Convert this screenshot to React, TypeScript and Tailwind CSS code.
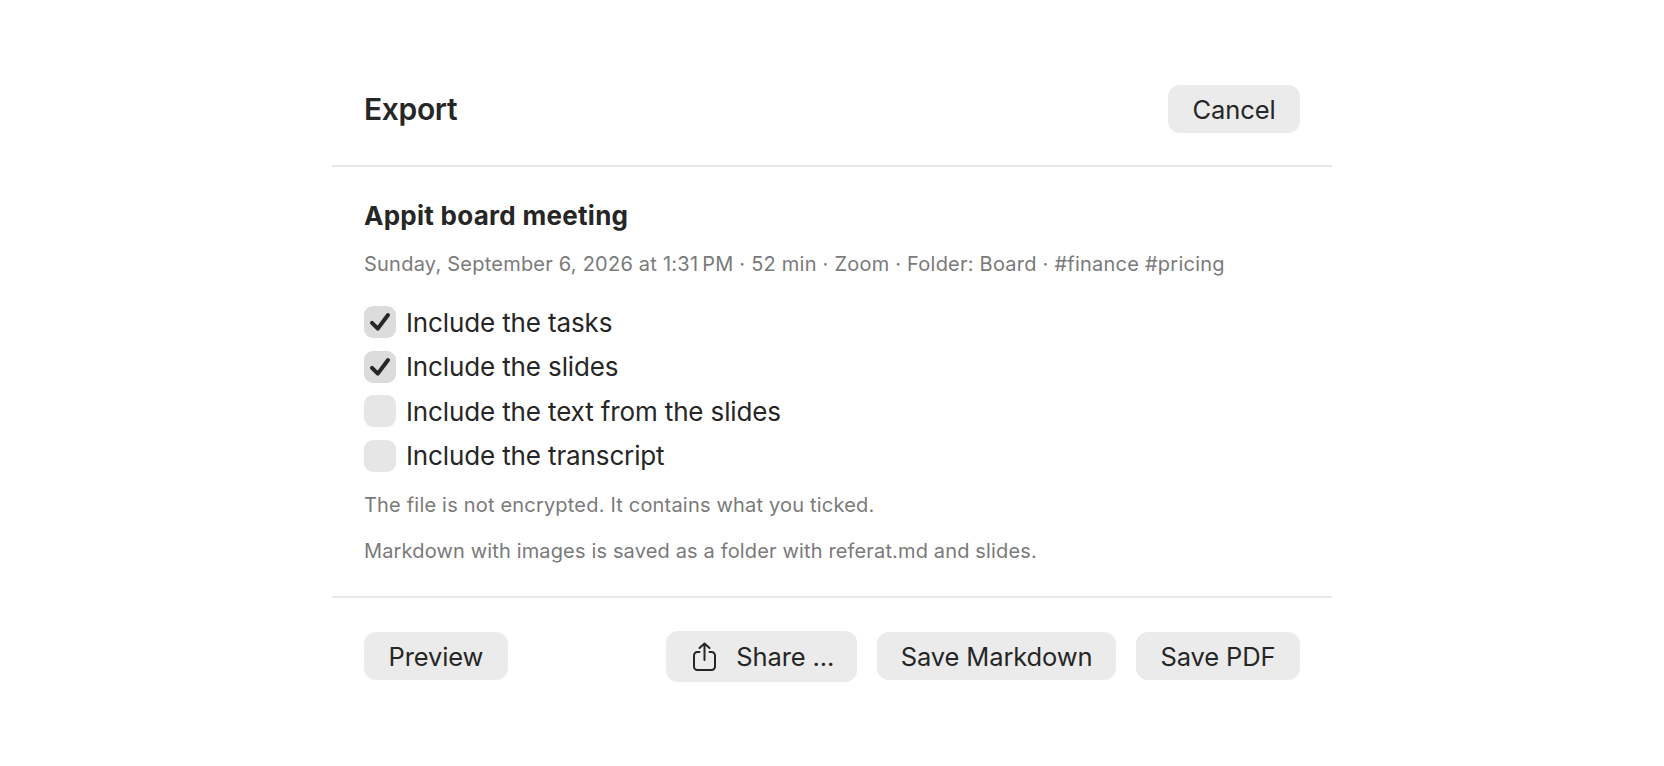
const options = [
  { label: 'Include the tasks', checked: true },
  { label: 'Include the slides', checked: true },
  { label: 'Include the text from the slides', checked: false },
  { label: 'Include the transcript', checked: false },
];

function Button({ children, className = '' }: { children: React.ReactNode; className?: string }) {
  return (
    <button className={`flex h-12 items-center justify-center rounded-[12px] bg-[#ebebeb] px-[24.5px] pt-[3px] text-[25.5px] tracking-[-0.12px] text-[#262626] ${className}`}>
      {children}
    </button>
  );
}

export default function App() {
  return (
    <div className="flex min-h-screen justify-center bg-white font-['Inter','Liberation_Sans',sans-serif]">
      <div className="mt-[85px] w-[1000px]">
        {/* Header */}
        <div className="flex h-[82px] items-start justify-between border-b-2 border-[#e8e8e8] px-8">
          <h1 className="mt-[2px] text-[30px] font-semibold tracking-[-0.35px] text-[#262626]">Export</h1>
          <Button>Cancel</Button>
        </div>

        {/* Body */}
        <div className="border-b-2 border-[#e8e8e8] px-8 pb-[31px] pt-[31px]">
          <h2 className="text-[26px] font-bold leading-[36px] tracking-[0.28px] text-[#262626]">Appit board meeting</h2>
          <p className="mt-[16px] text-[20px] leading-[28px] tracking-[0.23px] text-[#7a7a7a]">
            Sunday, September 6, 2026 at 1:31{'\u2009'}PM · 52 min · Zoom · Folder: Board · #finance #pricing
          </p>
          <div className="mt-[28px] flex flex-col gap-[12.5px]">
            {options.map((o) => (
              <label key={o.label} className="flex h-8 items-center gap-[10px] text-[26px] tracking-[-0.13px] text-[#262626]">
                <span className={`flex h-8 w-8 items-center justify-center rounded-[9px] ${o.checked ? 'bg-[#dcdcdc]' : 'bg-[#e6e6e6]'}`}>
                  {o.checked && (
                    <svg width="32" height="32" viewBox="0 0 32 32" fill="none" stroke="currentColor" strokeWidth="4" strokeLinecap="round" strokeLinejoin="round">
                      <path d="M8 16.8 13.8 22.6 24 9" />
                    </svg>
                  )}
                </span>
                {o.label}
              </label>
            ))}
          </div>
          <p className="mt-[19px] text-[20px] leading-[28px] tracking-[0.19px] text-[#7a7a7a]">The file is not encrypted. It contains what you ticked.</p>
          <p className="mt-[18px] text-[20px] leading-[28px] tracking-[0.15px] text-[#7a7a7a]">Markdown with images is saved as a folder with referat.md and slides.</p>
        </div>

        {/* Footer */}
        <div className="flex items-center justify-between px-8 pt-[33px]">
          <Button>Preview</Button>
          <div className="flex items-center gap-5">
            <Button className="h-[51px] w-[191px] !justify-start gap-[20px] !pl-[27px] !pr-0 !pt-0">
              <svg width="23" height="29" viewBox="0 0 23 29" fill="none" stroke="currentColor" strokeWidth="2" strokeLinecap="round" strokeLinejoin="round">
                <path d="M6.5 10H4.5a3.5 3.5 0 0 0-3.5 3.5v11a3.5 3.5 0 0 0 3.5 3.5h14a3.5 3.5 0 0 0 3.5-3.5v-11a3.5 3.5 0 0 0-3.5-3.5h-2" />
                <path d="M11.5 18V1.5M6.5 6 11.5 1.5 16.5 6" />
              </svg>
              <span className="pt-[3px]">Share ...</span>
            </Button>
            <Button className="!px-[23.5px]">Save Markdown</Button>
            <Button>Save PDF</Button>
          </div>
        </div>
      </div>
    </div>
  );
}
